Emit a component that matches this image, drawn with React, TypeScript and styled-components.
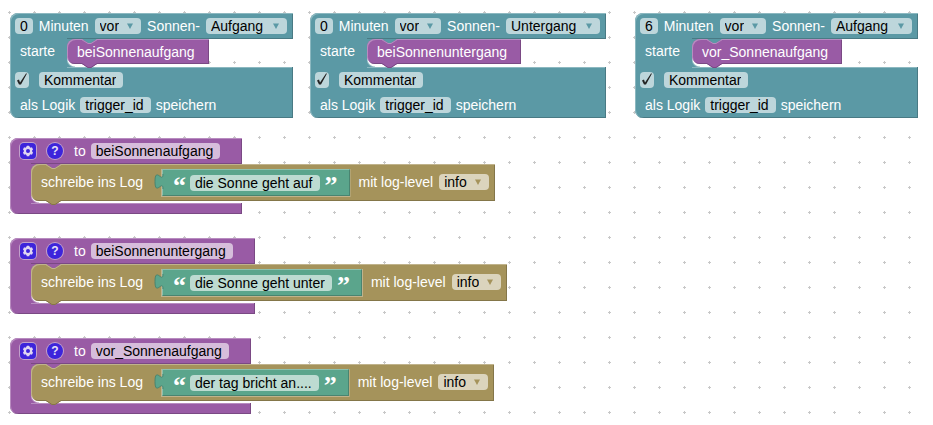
import React, { useId } from "react";
import styled, { createGlobalStyle, css } from "styled-components";

type Tone = { base: string; light: string; dark: string; field: string };

const teal: Tone = { base: "#5b99a5", light: "#8cb8c0", dark: "#497a84", field: "#bdd6db" };
const purple: Tone = { base: "#995ba5", light: "#b88cc0", dark: "#7a4984", field: "#d6bddb" };
const olive: Tone = { base: "#a5935b", light: "#c0b38c", dark: "#847649", field: "#dbd4bd" };
const green: Tone = { base: "#5ba58c", light: "#8cc0ae", dark: "#498470", field: "#bddbd1" };

const GlobalStyle = createGlobalStyle`
  * { box-sizing: border-box; }
  body {
    margin: 0;
    background: #fff;
    color: #fff;
    font-family: "Liberation Sans", Arial, sans-serif;
    font-size: 14px;
    line-height: 16px;
  }
`;

const Workspace = styled.main`
  position: relative;
  min-height: 100vh;
  overflow: hidden;
`;

const GridLayer = styled.svg`
  position: absolute;
  inset: 0;
  width: 100%;
  height: 100%;
`;

const Placed = styled.section<{ $x: number; $y: number }>`
  position: absolute;
  left: ${(p) => p.$x}px;
  top: ${(p) => p.$y}px;
`;

const tones = css<{ $tone: Tone }>`
  --base: ${(p) => p.$tone.base};
  --light: ${(p) => p.$tone.light};
  --dark: ${(p) => p.$tone.dark};
  --field: ${(p) => p.$tone.field};
`;

const ClampBlock = styled.div<{ $tone: Tone }>`
  ${tones}
  display: inline-flex;
  flex-direction: column;
  white-space: nowrap;
`;

const ClampHead = styled.div<{ $procedure?: boolean }>`
  display: flex;
  align-items: center;
  gap: ${(p) => (p.$procedure ? 11 : 6)}px;
  height: 26px;
  padding: ${(p) => (p.$procedure ? "0 22px 0 10px" : "0 6px 0 5px")};
  background: var(--base);
  border-radius: 8px 0 0 0;
  box-shadow: inset 1px 1px 0 var(--light), inset -1px -1px 0 var(--dark);
`;

const ClampBody = styled.div`
  display: flex;
  width: 0;
  min-width: 100%;
`;

const Arm = styled.div`
  position: relative;
  z-index: 1;
  flex: none;
  min-width: 21px;
  padding: 5px 12px 0 10px;
  margin: -1px 0;
  background: var(--base);
  box-shadow: inset 1px 0 0 var(--light);

  &:empty {
    padding: 0;
  }
`;

const Slot = styled.div<{ $space: number }>`
  position: relative;
  z-index: 2;
  flex: none;
  padding-bottom: ${(p) => p.$space}px;

  &::before {
    content: "";
    position: absolute;
    top: 0;
    bottom: 0;
    left: 0;
    width: 8px;
    background:
      radial-gradient(circle at 100% 100%, transparent 7px, var(--base) 8px) top / 8px 8px no-repeat,
      radial-gradient(circle at 100% 0, transparent 7px, var(--light) 8px, var(--base) 9px) bottom / 8px 8px no-repeat,
      #fff;
  }
`;

const ClampFoot = styled.div`
  min-height: 11px;
  background: var(--base);
  border-radius: 0 0 0 8px;
  box-shadow: inset 1px 0 0 var(--light), inset -1px -1px 0 var(--dark), inset 0 1px 0 var(--light);
`;

const FootRows = styled.div`
  padding-bottom: 1px;
`;

const Row = styled.div<{ $inset: number; $gap?: number }>`
  display: flex;
  align-items: center;
  gap: ${(p) => p.$gap ?? 5}px;
  height: 25px;
  padding-left: ${(p) => p.$inset}px;
`;

const Statement = styled.div<{ $tone: Tone; $tall?: boolean }>`
  ${tones}
  position: relative;
  display: flex;
  align-items: center;
  gap: 5px;
  height: ${(p) => (p.$tall ? 37 : 25)}px;
  padding: ${(p) => (p.$tall ? "0 6px 2px 10px" : "0 14px 0 10px")};
  background: var(--base);
  border-radius: 8px 0 0 8px;
  box-shadow: inset 1px 1px 0 var(--light), inset -1px -1px 0 var(--dark);
`;

const NotchSvg = styled.svg<{ $edge: "top" | "bottom" }>`
  position: absolute;
  z-index: 1;
  left: 14px;
  ${(p) => (p.$edge === "top" ? "top: 0;" : "top: 100%; margin-top: -1px;")}
`;

const ValueBlock = styled.div<{ $tone: Tone }>`
  ${tones}
  position: relative;
  display: flex;
  align-items: center;
  gap: 5px;
  height: 27px;
  margin: 2px 4px 0 14px;
  padding: 0 12px 0 10px;
  background: var(--base);
  border: 1px solid;
  border-color: var(--light) var(--dark) var(--dark) var(--light);
  outline: 1px solid ${olive.light};
  clip-path: inset(0 -1px -1px -9px);
`;

const ValueTab = styled.svg`
  position: absolute;
  left: -9px;
  top: 4px;
`;

const Quote = styled.span`
  width: 12px;
  height: 16px;
  font: bold 26px/22px "Liberation Serif", "Times New Roman", serif;
`;

const fieldStyle = css`
  height: 16px;
  margin: 0;
  border: 0;
  border-radius: 4px;
  outline: none;
  background-color: var(--field);
  color: #000;
  font: inherit;
  line-height: 16px;
`;

const NumberField = styled.input`
  ${fieldStyle}
  field-sizing: content;
  padding: 0 5px;
`;

const TextField = styled(NumberField)`
  padding: 0 7px 0 5px;
`;

const DropBox = styled.span`
  position: relative;
  display: inline-flex;
`;

const Drop = styled.select<{ $roomy?: boolean }>`
  ${fieldStyle}
  appearance: none;
  field-sizing: content;
  padding: 0 ${(p) => (p.$roomy ? 24 : 22)}px 0 5px;
`;

const DropArrow = styled.svg`
  position: absolute;
  right: 8px;
  top: 5px;
  pointer-events: none;
  fill: var(--base);
`;

const Check = styled.input`
  ${fieldStyle}
  appearance: none;
  width: 14px;
  margin-right: 5px;

  &:checked::before {
    content: "";
    display: block;
    width: 14px;
    height: 16px;
    background: #222;
    clip-path: polygon(2px 9px, 4px 8px, 5px 11px, 11px 2px, 12px 2px, 6px 13px, 4px 13px);
  }
`;

const IconButton = styled.button<{ $round?: boolean }>`
  display: grid;
  place-items: center;
  width: 16px;
  height: 16px;
  padding: 0;
  border: 0;
  border-radius: ${(p) => (p.$round ? 8 : 4)}px;
  background: #3d24db;
  box-shadow: 0 0 0 1px #c2a0cb;
  color: #e6e0f8;
  font: bold 12px/16px "Liberation Sans", Arial, sans-serif;
`;

const LevelLabel = styled.span`
  margin-right: 1px;
`;

function Notch({ fill, line }: { fill: string; line: string }) {
  return (
    <NotchSvg $edge="top" width="17" height="6" aria-hidden="true">
      <path d="M0 0 H1 L7 4 H10 L16 0 H17 Z" fill={fill} />
      <path d="M0.5 0.5 L7 4.5 H10 L16.5 0.5" fill="none" stroke={line} />
    </NotchSvg>
  );
}

function Tab({ tone }: { tone: Tone }) {
  return (
    <NotchSvg $edge="bottom" width="17" height="6" aria-hidden="true">
      <path d="M1 0 H16 V1 L10 5 H7 L1 1 Z" fill={tone.base} />
      <path d="M1 0.5 L7 4.5 H10 L16 0.5" fill="none" stroke={tone.dark} />
    </NotchSvg>
  );
}

type ChoiceProps = { label: string; value: string; options: string[]; roomy?: boolean };

function Choice({ label, value, options, roomy }: ChoiceProps) {
  return (
    <DropBox>
      <Drop aria-label={label} defaultValue={value} $roomy={roomy}>
        {options.map((o) => (
          <option key={o}>{o}</option>
        ))}
      </Drop>
      <DropArrow width="6" height="6" viewBox="0 0 6 6" aria-hidden="true">
        <path d="M0 0.5 H6 L3 6 Z" />
      </DropArrow>
    </DropBox>
  );
}

const teeth = [0, 60, 120, 180, 240, 300];

function GearIcon() {
  return (
    <svg width="16" height="16" viewBox="0 0 16 16" aria-hidden="true">
      <g fill="#e0d6f2">
        {teeth.map((a) => (
          <rect key={a} x="6.6" y="2.8" width="2.8" height="3" rx="0.5" transform={`rotate(${a} 8 8)`} />
        ))}
        <circle cx="8" cy="8" r="4.3" />
      </g>
      <circle cx="8" cy="8" r="2" fill="#3d24db" />
    </svg>
  );
}

type Trigger = { x: number; minutes: string; event: string; call: string };

function TriggerBlock({ x, minutes, event, call }: Trigger) {
  return (
    <Placed $x={x} $y={13}>
      <ClampBlock $tone={teal}>
        <ClampHead>
          <NumberField aria-label="Minuten" defaultValue={minutes} />
          <span>Minuten</span>
          <Choice label="Richtung" value="vor" options={["vor", "nach"]} />
          <span>Sonnen-</span>
          <Choice label="Ereignis" value={event} options={["Aufgang", "Untergang"]} roomy />
        </ClampHead>
        <ClampBody>
          <Arm>starte</Arm>
          <Slot $space={3}>
            <Statement $tone={purple}>
              <Notch fill={teal.base} line={purple.light} />
              {call}
              <Tab tone={purple} />
            </Statement>
          </Slot>
        </ClampBody>
        <ClampFoot>
          <FootRows>
            <Row $inset={5}>
              <Check type="checkbox" aria-label="aktiv" defaultChecked />
              <TextField aria-label="Kommentar" defaultValue="Kommentar" />
            </Row>
            <Row $inset={10}>
              <span>als Logik</span>
              <TextField aria-label="als Logik" defaultValue="trigger_id" />
              <span>speichern</span>
            </Row>
          </FootRows>
        </ClampFoot>
      </ClampBlock>
    </Placed>
  );
}

type Procedure = { y: number; name: string; text: string };

function ProcedureBlock({ y, name, text }: Procedure) {
  const nameId = useId();
  return (
    <Placed $x={10} $y={y}>
      <ClampBlock $tone={purple}>
        <ClampHead $procedure>
          <IconButton type="button" aria-label="Einstellungen">
            <GearIcon />
          </IconButton>
          <IconButton type="button" $round aria-label="Hilfe">
            ?
          </IconButton>
          <Row $inset={0}>
            <label htmlFor={nameId}>to</label>
            <TextField id={nameId} defaultValue={name} />
          </Row>
        </ClampHead>
        <ClampBody>
          <Arm />
          <Slot $space={2}>
            <Statement $tone={olive} $tall>
              <Notch fill={purple.base} line={olive.light} />
              <span>schreibe ins Log</span>
              <ValueBlock $tone={green}>
                <ValueTab width="10" height="16" aria-hidden="true">
                  <path d="M10 0 H9 C9 10 1 -8 1 7.5 S9 5 9 15 H10 Z" fill={green.base} />
                  <path d="M9 0 C9 10 1 -8 1 7.5 S9 5 9 15" fill="none" stroke={green.dark} />
                </ValueTab>
                <Quote>“</Quote>
                <TextField aria-label="Text" defaultValue={text} />
                <Quote>”</Quote>
              </ValueBlock>
              <LevelLabel>mit log-level</LevelLabel>
              <Choice label="mit log-level" value="info" options={["info", "debug", "warn", "error"]} />
              <Tab tone={olive} />
            </Statement>
          </Slot>
        </ClampBody>
        <ClampFoot />
      </ClampBlock>
    </Placed>
  );
}

const triggers: Trigger[] = [
  { x: 10, minutes: "0", event: "Aufgang", call: "beiSonnenaufgang" },
  { x: 310, minutes: "0", event: "Untergang", call: "beiSonnenuntergang" },
  { x: 635, minutes: "6", event: "Aufgang", call: "vor_Sonnenaufgang" },
];

const procedures: Procedure[] = [
  { y: 138, name: "beiSonnenaufgang", text: "die Sonne geht auf" },
  { y: 238, name: "beiSonnenuntergang", text: "die Sonne geht unter" },
  { y: 338, name: "vor_Sonnenaufgang", text: "der tag bricht an...." },
];

export default function App() {
  return (
    <>
      <GlobalStyle />
      <Workspace>
        <GridLayer aria-hidden="true">
          <defs>
            <pattern id="grid" x="8" y="11" width="25" height="25" patternUnits="userSpaceOnUse">
              <path d="M0 1.5 H3 M1.5 0 V3" stroke="#c8c8c8" />
            </pattern>
          </defs>
          <rect width="100%" height="100%" fill="url(#grid)" />
        </GridLayer>
        {triggers.map((t) => (
          <TriggerBlock key={t.x} {...t} />
        ))}
        {procedures.map((p) => (
          <ProcedureBlock key={p.y} {...p} />
        ))}
      </Workspace>
    </>
  );
}
